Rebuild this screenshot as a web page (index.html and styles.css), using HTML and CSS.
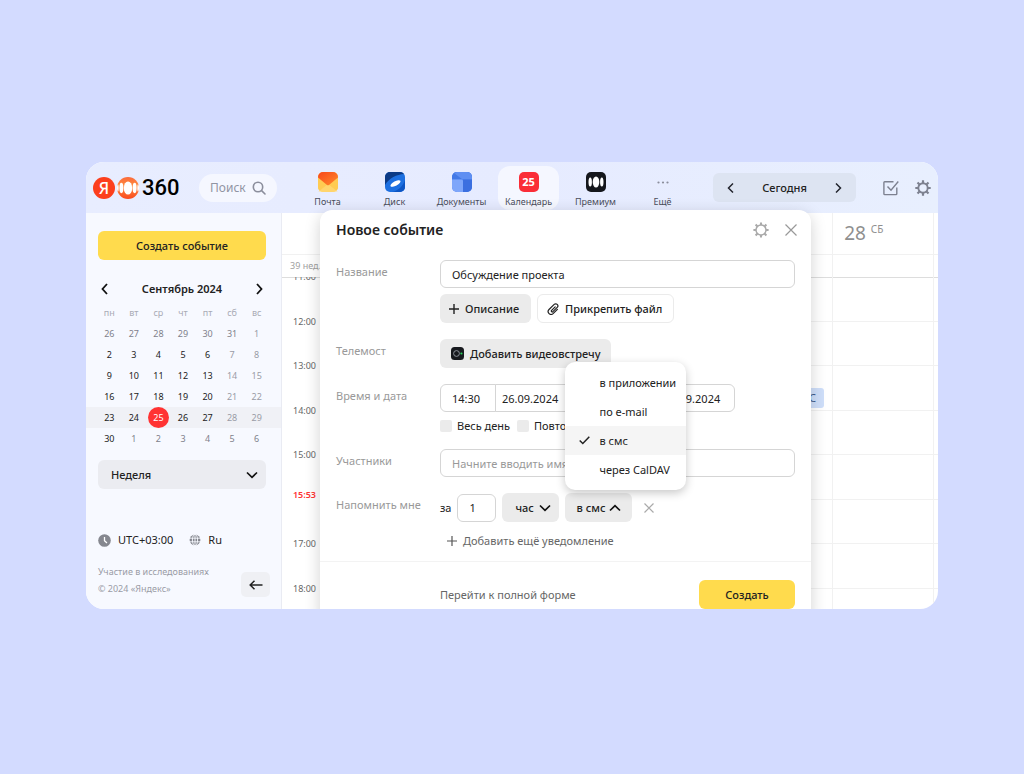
FILE: index.html
```html
<!DOCTYPE html>
<html lang="ru">
  <head>
    <meta charset="UTF-8" />
    <meta name="viewport" content="width=device-width, initial-scale=1.0" />
    <title>Календарь</title>
    <link rel="stylesheet" href="styles.css" />
  </head>
  <body>
    <div class="app">
      <header class="header">
        <a href="#" class="logo" aria-label="Яндекс 360">
          <span class="logo-ya">Я</span>
          <svg class="logo-mark" width="22" height="22" viewBox="0 0 22 22">
            <defs>
              <linearGradient id="orange" x1="0" y1="0" x2="0" y2="1">
                <stop offset="0" stop-color="#fb6a3c" />
                <stop offset="0.4" stop-color="#ff8a3d" />
                <stop offset="1" stop-color="#fa4a1e" />
              </linearGradient>
              <clipPath id="mark"><circle cx="11" cy="11" r="11" /></clipPath>
            </defs>
            <g clip-path="url(#mark)">
              <rect width="22" height="22" fill="url(#orange)" />
              <ellipse cx="11" cy="11" rx="4.200" ry="6.600" fill="#fff" />
              <ellipse cx="4.400" cy="11" rx="2" ry="5.200" fill="#fff" />
              <ellipse cx="17.600" cy="11" rx="2" ry="5.200" fill="#fff" />
              <ellipse cx="0.800" cy="11" rx="0.900" ry="3.800" fill="#fff" />
              <ellipse cx="21.200" cy="11" rx="0.900" ry="3.800" fill="#fff" />
            </g>
          </svg>
          <span class="logo-text">360</span>
        </a>

        <label class="search">
          <input type="text" class="search-input" placeholder="Поиск" aria-label="Поиск" />
          <svg width="14" height="14" viewBox="0 0 14 14" fill="none" stroke="#8b8e9c" stroke-width="1.600" stroke-linecap="round">
            <circle cx="6" cy="6" r="4.700" />
            <path d="M9.600 9.600 13 13" />
          </svg>
        </label>

        <nav class="tabs">
          <a href="#" class="tab">
            <svg width="20" height="20" viewBox="0 0 20 20">
              <defs>
                <linearGradient id="flap" x1="0" y1="0" x2="1" y2="1">
                  <stop offset="0" stop-color="#f8471c" />
                  <stop offset="1" stop-color="#ff8a2a" />
                </linearGradient>
              </defs>
              <rect width="20" height="20" rx="5" fill="#ffd56b" />
              <path d="M0 5 10 13 20 5v10a5 5 0 0 1-5 5H5a5 5 0 0 1-5-5z" fill="#ffcb52" />
              <path d="M0 20 10 12 20 20z" fill="#ffe08a" opacity="0.500" />
              <path d="M0 5.500V5a5 5 0 0 1 5-5h10a5 5 0 0 1 5 5v.5L11.300 12.800a2 2 0 0 1-2.600 0z" fill="url(#flap)" />
            </svg>
            <span>Почта</span>
          </a>
          <a href="#" class="tab">
            <svg width="20" height="20" viewBox="0 0 20 20">
              <rect width="20" height="20" rx="5" fill="#1d6fe0" />
              <path d="M0 11V5a5 5 0 0 1 5-5h10a5 5 0 0 1 4 2C12 2.500 4 6 0 13z" fill="#0b3a86" />
              <path d="M20 8v7a5 5 0 0 1-5 5H7C13 19 18 14 20 8z" fill="#0d55c4" />
              <ellipse cx="10.500" cy="11.500" rx="5.600" ry="2.300" transform="rotate(-28 10.500 11.500)" fill="#fff" />
            </svg>
            <span>Диск</span>
          </a>
          <a href="#" class="tab">
            <svg width="20" height="20" viewBox="0 0 20 20">
              <rect width="20" height="20" rx="5" fill="#4a80ee" />
              <path d="M5 0h10a5 5 0 0 1 5 5v2H0V5a5 5 0 0 1 5-5z" fill="#4379e6" />
              <path d="M2 1 10.500 7.500H20V5a5 5 0 0 0-5-5H5a5 5 0 0 0-3 1z" fill="#5f8ff2" />
              <path d="M11 7.500h9V15a5 5 0 0 1-5 5h-4z" fill="#3b6fe0" />
              <path d="M0 7.500h9.500a1.500 1.500 0 0 1 1.500 1.500v11H5a5 5 0 0 1-5-5z" fill="#7ea6fa" />
            </svg>
            <span>Документы</span>
          </a>
          <a href="#" class="tab tab-active">
            <span class="calendar-icon">25</span>
            <span>Календарь</span>
          </a>
          <a href="#" class="tab">
            <svg width="20" height="20" viewBox="0 0 20 20">
              <rect width="20" height="20" rx="5" fill="#15171c" />
              <ellipse cx="10" cy="10" rx="3.300" ry="5.500" fill="#fff" />
              <ellipse cx="4.200" cy="10" rx="1.700" ry="4.600" fill="#fff" />
              <ellipse cx="15.800" cy="10" rx="1.700" ry="4.600" fill="#fff" />
            </svg>
            <span>Премиум</span>
          </a>
          <a href="#" class="tab">
            <svg width="20" height="20" viewBox="0 0 20 20" fill="#8b8e9c">
              <circle cx="5.500" cy="10.500" r="1.100" />
              <circle cx="10" cy="10.500" r="1.100" />
              <circle cx="14.500" cy="10.500" r="1.100" />
            </svg>
            <span>Ещё</span>
          </a>
        </nav>

        <div class="date-nav">
          <button type="button" class="icon-btn" aria-label="Назад">
            <svg width="10" height="10" viewBox="0 0 10 10" fill="none" stroke="#23252e" stroke-width="1.500">
              <path d="M7 .5 2.500 5 7 9.500" />
            </svg>
          </button>
          <button type="button" class="today-btn">Сегодня</button>
          <button type="button" class="icon-btn" aria-label="Вперёд">
            <svg width="10" height="10" viewBox="0 0 10 10" fill="none" stroke="#23252e" stroke-width="1.500">
              <path d="M3 .5 7.500 5 3 9.500" />
            </svg>
          </button>
        </div>

        <div class="header-actions">
          <button type="button" class="icon-btn" aria-label="Задачи">
            <svg width="16" height="16" viewBox="0 0 16 16" fill="none" stroke="#7d8190" stroke-width="1.400">
              <path d="M10.500 1.700H1.700a.8.8 0 0 0-.8.8v11.300a.8.8 0 0 0 .8.8H13a.8.8 0 0 0 .8-.8V7.500" />
              <path d="M4.500 6.500 8 10.300 15.300 1.500" />
            </svg>
          </button>
          <button type="button" class="icon-btn" aria-label="Настройки">
            <svg width="16" height="16" viewBox="0 0 16 16" fill="none" stroke="#7d8190">
              <circle cx="8" cy="8" r="4.700" stroke-width="1.900" />
              <path stroke-width="2.200" d="M8 3.500V.3M8 12.500v3.200M3.500 8H.3M12.500 8h3.200M4.800 4.800 2.500 2.500M11.200 11.200l2.300 2.300M4.800 11.200l-2.300 2.300M11.200 4.800l2.300-2.300" />
            </svg>
          </button>
        </div>
      </header>

      <div class="content">
        <aside class="sidebar">
          <button type="button" class="btn btn-primary">Создать событие</button>

          <div class="month-header">
            <button type="button" class="icon-btn" aria-label="Предыдущий месяц">
              <svg width="10" height="12" viewBox="0 0 10 12" fill="none" stroke="#111" stroke-width="1.800">
                <path d="M7 1 2.500 6 7 11" />
              </svg>
            </button>
            <span>Сентябрь 2024</span>
            <button type="button" class="icon-btn" aria-label="Следующий месяц">
              <svg width="10" height="12" viewBox="0 0 10 12" fill="none" stroke="#111" stroke-width="1.800">
                <path d="M3 1 7.500 6 3 11" />
              </svg>
            </button>
          </div>

          <table class="month">
            <thead>
              <tr><th>пн</th><th>вт</th><th>ср</th><th>чт</th><th>пт</th><th>сб</th><th>вс</th></tr>
            </thead>
            <tbody>
              <tr><td class="other">26</td><td class="other">27</td><td class="other">28</td><td class="other">29</td><td class="other">30</td><td class="other">31</td><td>1</td></tr>
              <tr><td>2</td><td>3</td><td>4</td><td>5</td><td>6</td><td>7</td><td>8</td></tr>
              <tr><td>9</td><td>10</td><td>11</td><td>12</td><td>13</td><td>14</td><td>15</td></tr>
              <tr><td>16</td><td>17</td><td>18</td><td>19</td><td>20</td><td>21</td><td>22</td></tr>
              <tr class="current-week"><td>23</td><td>24</td><td><span class="today">25</span></td><td>26</td><td>27</td><td>28</td><td>29</td></tr>
              <tr><td>30</td><td class="other">1</td><td class="other">2</td><td class="other">3</td><td class="other">4</td><td class="other">5</td><td class="other">6</td></tr>
            </tbody>
          </table>

          <div class="select view-select">
            <select aria-label="Вид календаря">
              <option>Неделя</option>
              <option>День</option>
              <option>Месяц</option>
            </select>
            <svg width="12" height="8" viewBox="0 0 12 8" fill="none" stroke="#111" stroke-width="1.700">
              <path d="M1 1.500 6 6.300 11 1.500" />
            </svg>
          </div>

          <div class="locale">
            <a href="#">
              <svg width="13" height="13" viewBox="0 0 13 13">
                <circle cx="6.500" cy="6.500" r="6.300" fill="#85878f" />
                <path d="M6.500 3v3.700L9 9" fill="none" stroke="#fff" stroke-width="1.300" />
              </svg>
              UTC+03:00
            </a>
            <a href="#">
              <svg width="12" height="12" viewBox="0 0 12 12">
                <circle cx="6" cy="6" r="5.400" fill="#85878f" />
                <g fill="none" stroke="#f7f9ff" stroke-width="0.900">
                  <path d="M6 0v12M0 4.200h12M0 7.800h12" />
                  <ellipse cx="6" cy="6" rx="2.600" ry="5.800" />
                </g>
              </svg>
              Ru
            </a>
          </div>

          <footer class="sidebar-footer">
            <div class="links">
              <a href="#">Участие в исследованиях</a>
              <a href="#">© 2024 «Яндекс»</a>
            </div>
            <button type="button" class="collapse-btn" aria-label="Свернуть">
              <svg width="14" height="10" viewBox="0 0 14 10" fill="none" stroke="#222" stroke-width="1.500">
                <path d="M13.500 5H1.200M5.500 .8 1.200 5l4.300 4.200" />
              </svg>
            </button>
          </footer>
        </aside>

        <main class="week">
          <div class="week-row week-days">
            <div></div><div></div><div></div><div></div><div></div><div></div>
            <div class="day-name">28 <sup>СБ</sup></div>
            <div></div>
          </div>
          <div class="week-row week-allday">
            <div class="week-number">39 нед.</div>
            <div></div><div></div><div></div><div></div><div></div><div></div><div></div>
          </div>
          <div class="hours">
            <div class="week-row"><time>11:00</time><div></div><div></div><div></div><div></div><div></div><div></div><div></div></div>
            <div class="week-row"><time>12:00</time><div></div><div></div><div></div><div></div><div></div><div></div><div></div></div>
            <div class="week-row"><time>13:00</time><div></div><div></div><div></div><div></div><div class="slot"><a href="#" class="event">С</a></div><div></div><div></div></div>
            <div class="week-row"><time>14:00</time><div></div><div></div><div></div><div></div><div></div><div></div><div></div></div>
            <div class="week-row"><time>15:00</time><div></div><div></div><div></div><div></div><div></div><div></div><div></div></div>
            <div class="week-row"><time></time><div></div><div></div><div></div><div></div><div></div><div></div><div></div></div>
            <div class="week-row"><time>17:00</time><div></div><div></div><div></div><div></div><div></div><div></div><div></div></div>
            <div class="week-row week-row-last"><time>18:00</time><div></div><div></div><div></div><div></div><div></div><div></div><div></div></div>
            <time class="now">15:53</time>
          </div>
        </main>
      </div>

      <section class="modal" role="dialog" aria-labelledby="modalTitle">
        <div class="modal-header">
          <h1 id="modalTitle">Новое событие</h1>
          <button type="button" class="icon-btn" aria-label="Настройки события">
            <svg width="16" height="16" viewBox="0 0 16 16" fill="none" stroke="#aaa">
              <circle cx="8" cy="8" r="5" stroke-width="1.500" />
              <path stroke-width="2.100" d="M8 3V.4M8 13v2.600M3 8H.4M13 8h2.600M4.500 4.500 2.600 2.600M11.500 11.500l1.900 1.900M4.500 11.500l-1.900 1.900M11.500 4.500l1.900-1.900" />
            </svg>
          </button>
          <button type="button" class="icon-btn" aria-label="Закрыть">
            <svg width="12" height="12" viewBox="0 0 12 12" stroke="#999" stroke-width="1.200">
              <path d="M.5.5l11 11M11.500.5l-11 11" />
            </svg>
          </button>
        </div>

        <form class="form">
          <div class="form-row">
            <label class="form-label" for="eventName">Название</label>
            <div class="field">
              <input type="text" id="eventName" class="input" value="Обсуждение проекта" />
              <div class="button-group">
                <button type="button" class="btn btn-gray">
                  <svg width="10" height="10" viewBox="0 0 10 10" stroke="#222" stroke-width="1.400">
                    <path d="M5 0v10M0 5h10" />
                  </svg>
                  Описание
                </button>
                <button type="button" class="btn btn-outline">
                  <svg width="12" height="12" viewBox="0 0 12 12" fill="none" stroke="#222" stroke-width="1.200" stroke-linecap="round">
                    <path d="M8.200 3.800 4.600 7.400a.9.9 0 0 0 1.300 1.300l4.300-4.300a2.100 2.100 0 0 0-3-3L2 6.500a2.900 2.900 0 0 0 4.100 4.100l4.300-4.300" />
                  </svg>
                  Прикрепить файл
                </button>
              </div>
            </div>
          </div>

          <div class="form-row">
            <span class="form-label">Телемост</span>
            <div class="field">
              <button type="button" class="btn btn-gray btn-video">
                <svg width="13" height="13" viewBox="0 0 13 13">
                  <rect width="13" height="13" rx="3.500" fill="#17191e" />
                  <circle cx="5.500" cy="6.500" r="2.900" fill="none" stroke="#8d939c" stroke-width="1" />
                  <circle cx="10.400" cy="6.500" r="1.100" fill="#27d35a" />
                </svg>
                Добавить видеовстречу
              </button>
            </div>
          </div>

          <div class="form-row">
            <span class="form-label">Время и дата</span>
            <div class="field">
              <div class="range">
                <div class="date-group">
                  <input type="text" class="input time-input" value="14:30" aria-label="Время начала" />
                  <input type="text" class="input date-input" value="26.09.2024" aria-label="Дата начала" />
                </div>
                <span class="dash">–</span>
                <div class="date-group">
                  <input type="text" class="input time-input" value="15:00" aria-label="Время окончания" />
                  <input type="text" class="input date-input" value="26.09.2024" aria-label="Дата окончания" />
                </div>
              </div>
              <div class="checks">
                <label><input type="checkbox" /> Весь день</label>
                <label><input type="checkbox" /> Повторять</label>
              </div>
            </div>
          </div>

          <div class="form-row">
            <label class="form-label" for="members">Участники</label>
            <div class="field">
              <input type="text" id="members" class="input" placeholder="Начните вводить имя" />
            </div>
          </div>

          <div class="form-row">
            <label class="form-label" for="remindValue">Напомнить мне</label>
            <div class="field">
              <div class="reminder">
                <span>за</span>
                <input type="text" id="remindValue" class="input count-input" value="1" />
                <div class="select unit-select">
                  <select aria-label="Единица времени">
                    <option>час</option>
                    <option>мин</option>
                    <option>день</option>
                  </select>
                  <svg width="12" height="8" viewBox="0 0 12 8" fill="none" stroke="#111" stroke-width="1.700">
                    <path d="M1 1.500 6 6.300 11 1.500" />
                  </svg>
                </div>
                <div class="dropdown">
                  <button type="button" class="btn btn-gray dropdown-btn" aria-haspopup="listbox" aria-expanded="true">
                    в смс
                    <svg width="12" height="8" viewBox="0 0 12 8" fill="none" stroke="#111" stroke-width="1.700">
                      <path d="M1 6.500 6 1.700 11 6.500" />
                    </svg>
                  </button>
                  <ul class="menu" role="listbox">
                    <li role="option">в приложении</li>
                    <li role="option">по e-mail</li>
                    <li role="option" aria-selected="true" class="selected">
                      <svg width="11" height="9" viewBox="0 0 11 9" fill="none" stroke="#222" stroke-width="1.500">
                        <path d="M.7 4.500 3.800 7.500 10.300 .8" />
                      </svg>
                      в смс
                    </li>
                    <li role="option">через CalDAV</li>
                  </ul>
                </div>
                <button type="button" class="icon-btn remove-btn" aria-label="Удалить уведомление">
                  <svg width="10" height="10" viewBox="0 0 10 10" stroke="#aaa" stroke-width="1.200">
                    <path d="M.5.5l9 9M9.500.5l-9 9" />
                  </svg>
                </button>
              </div>
              <button type="button" class="add-btn">
                <svg width="10" height="10" viewBox="0 0 10 10" stroke="#555" stroke-width="1.200">
                  <path d="M5 0v10M0 5h10" />
                </svg>
                Добавить ещё уведомление
              </button>
            </div>
          </div>
        </form>

        <div class="modal-footer">
          <a href="#">Перейти к полной форме</a>
          <button type="button" class="btn btn-primary">Создать</button>
        </div>
      </section>
    </div>
  </body>
</html>
```
FILE: styles.css
```css
/* Base Styles */
:root {
  --page-color: #d3dbff;
  --yellow: #ffdb4d;
  --gray: #ebebeb;
  --border: #d5d5d5;
  --line: #f1f1f1;
  --text-color: #222;
  --muted: #999;
}

* {
  box-sizing: border-box;
}

body {
  margin: 0;
  padding: 162px 86px;
  background: var(--page-color);
  color: var(--text-color);
  font-family: "Noto Sans", sans-serif;
  font-size: 11px;
  line-height: 16px;
}

button,
input,
select {
  font: inherit;
  color: inherit;
}

button {
  padding: 0;
  border: none;
  background: none;
  cursor: pointer;
}

a {
  color: inherit;
  text-decoration: none;
}

svg {
  display: block;
  flex-shrink: 0;
}

.app {
  position: relative;
  display: flex;
  flex-direction: column;
  min-width: 852px;
  border-radius: 18px;
  overflow: hidden;
  background: #fff;
}

/* Header */
.header {
  display: flex;
  align-items: center;
  height: 51px;
  padding: 0 7px;
  background: linear-gradient(90deg, #e8edff, #e6ebff 50%, #e8effe);
}

.logo {
  display: flex;
  align-items: center;
  gap: 2px;
  width: 106px;
}

.logo-ya {
  width: 22px;
  height: 22px;
  border-radius: 50%;
  background: #fc3f1d;
  color: #fff;
  font-size: 16px;
  font-weight: 500;
  line-height: 22px;
  text-align: center;
}

.logo-text {
  margin-left: 1px;
  color: #000;
  font-family: Roboto, sans-serif;
  font-size: 22px;
  font-weight: 500;
  line-height: 22px;
}

.search {
  display: flex;
  align-items: center;
  justify-content: space-between;
  width: 78px;
  height: 28px;
  padding: 0 11px;
  border-radius: 14px;
  background: #f5f7ff;
}

.search-input {
  width: 40px;
  padding: 0;
  border: none;
  outline: none;
  background: none;
  font-size: 12px;
}

.search-input::placeholder {
  color: #9194a3;
  opacity: 1;
}

.tabs {
  display: flex;
  gap: 6px;
  margin-left: 20px;
}

.tab {
  display: flex;
  flex-direction: column;
  align-items: center;
  gap: 3px;
  width: 61px;
  height: 44px;
  padding-top: 6px;
  border-radius: 12px;
  color: #4a4d5a;
  font-size: 9px;
  line-height: 14px;
}

.tab-active {
  background: #f5f7ff;
}

.calendar-icon {
  width: 20px;
  height: 20px;
  border-radius: 5px;
  background: #fa2d37;
  color: #fff;
  font-size: 11px;
  font-weight: 700;
  line-height: 20px;
  text-align: center;
}

.icon-btn {
  display: flex;
  align-items: center;
  justify-content: center;
}

.date-nav {
  display: flex;
  align-items: center;
  justify-content: space-between;
  width: 143px;
  height: 29px;
  margin-left: 20px;
  padding: 0 13px;
  border-radius: 6px;
  background: #dde4f2;
}

.today-btn {
  font-weight: 500;
}

.header-actions {
  display: flex;
  gap: 16px;
  margin-left: auto;
}

.content {
  display: flex;
}

/* Sidebar */
.sidebar {
  width: 196px;
  padding: 18px 15px 12px 12px;
  border-right: 1px solid #e9ebf3;
  background: #f7f9ff;
  overflow: hidden;
}

.btn {
  display: inline-flex;
  align-items: center;
  justify-content: center;
  gap: 6px;
  height: 29px;
  border-radius: 6px;
  font-weight: 500;
}

.btn-primary {
  background: var(--yellow);
}

.sidebar .btn-primary {
  width: 100%;
}

.month-header {
  display: flex;
  align-items: center;
  justify-content: space-between;
  height: 20px;
  margin: 19px 2px 3px;
  font-weight: 600;
}

.month {
  width: 172px;
  margin-left: -1px;
  border-collapse: collapse;
  table-layout: fixed;
  font-size: 9px;
  line-height: 12px;
  text-align: center;
}

.month th,
.month td {
  height: 21px;
  padding: 0;
}

.month th {
  color: #a9abb5;
  font-weight: 400;
}

.month td:nth-child(n + 6) {
  color: #9a9ca6;
}

.month td.other {
  color: #7f818b;
}

.current-week {
  background: #f0f1f6;
  box-shadow: -12px 0 #f0f1f6, 12px 0 #f0f1f6;
}

.today {
  display: block;
  width: 21px;
  height: 21px;
  margin: 0 auto;
  border-radius: 50%;
  background: #ff3333;
  color: #fff;
  line-height: 21px;
}

.select {
  position: relative;
}

.select select {
  width: 100%;
  height: 29px;
  padding: 0 13px;
  border: none;
  border-radius: 6px;
  background: var(--gray);
  font-weight: 500;
  appearance: none;
}

.select svg {
  position: absolute;
  top: 11px;
  right: 8px;
  pointer-events: none;
}

.view-select {
  margin-top: 11px;
}

.view-select select {
  background: #ebecf1;
}

.locale {
  display: flex;
  gap: 16px;
  margin-top: 42px;
}

.locale a {
  display: flex;
  align-items: center;
  gap: 7px;
  height: 18px;
}

.sidebar-footer {
  display: flex;
  align-items: flex-end;
  justify-content: space-between;
  margin: 14px -4px 0 0;
}

.links {
  display: flex;
  flex-direction: column;
  color: #9a9ca6;
  font-size: 9px;
  line-height: 17px;
  white-space: nowrap;
}

.collapse-btn {
  display: flex;
  align-items: center;
  justify-content: center;
  width: 29px;
  height: 25px;
  border-radius: 5px;
  background: #eff0f4;
}

/* Week grid */
.week {
  flex: 1;
  display: flex;
  flex-direction: column;
}

.week-row {
  display: grid;
  grid-template-columns: 46px repeat(6, 1fr) 5px;
}

.week-row > div {
  border-left: 1px solid var(--line);
  border-bottom: 1px solid var(--line);
}

.week-row > :first-child {
  border-left: none;
}

.week-days {
  height: 42px;
}

.week-allday {
  height: 22px;
}

.week-allday > div {
  border-bottom-color: #ddd;
}

.day-name {
  padding: 10px 11px;
  color: #8f8f8f;
  font-size: 19px;
  line-height: 20px;
}

.day-name sup {
  font-size: 10px;
  line-height: 10px;
  vertical-align: 7px;
}

.week-number {
  padding-left: 8px;
  color: #a0a0a0;
  font-size: 9px;
  line-height: 22px;
  white-space: nowrap;
}

.hours {
  position: relative;
  flex: 1;
  display: flex;
  flex-direction: column;
  overflow: hidden;
}

.hours .week-row {
  flex: 1;
}

.hours .week-row-last {
  flex: 0 0 20px;
}

.week-row-last > div {
  border-bottom: none;
}

.hours time {
  height: 14px;
  margin-top: -7px;
  padding-right: 12px;
  color: #666;
  font-size: 9px;
  line-height: 14px;
  text-align: right;
}

.hours .now {
  position: absolute;
  top: 211px;
  left: 0;
  width: 46px;
  margin: 0;
  color: #f33;
  font-weight: 600;
}

.slot {
  padding-top: 22px;
}

.event {
  display: block;
  height: 20px;
  margin-right: 8px;
  padding-right: 8px;
  border-radius: 3px;
  background: #cfdffa;
  color: #44608c;
  line-height: 20px;
  text-align: right;
}

/* New event dialog */
.modal {
  position: absolute;
  top: 48px;
  left: 234px;
  width: 491px;
  border-radius: 12px;
  background: #fff;
  box-shadow: 0 4px 16px rgba(0, 0, 0, 0.18);
}

.modal-header {
  display: flex;
  align-items: center;
  gap: 16px;
  height: 40px;
  padding: 0 14px 0 16px;
}

.modal-header h1 {
  flex: 1;
  margin: 0;
  font-size: 14px;
  font-weight: 600;
}

.form {
  display: flex;
  flex-direction: column;
  gap: 16px;
  padding: 10px 16px 12px;
}

.form-row {
  display: flex;
}

.form-label {
  width: 104px;
  color: var(--muted);
  line-height: 24px;
}

.field {
  flex: 1;
}

.input {
  display: block;
  width: 100%;
  height: 28px;
  padding: 0 11px;
  border: 1px solid var(--border);
  border-radius: 6px;
  outline: none;
  background: #fff;
}

.input::placeholder {
  color: var(--muted);
  opacity: 1;
}

.button-group {
  display: flex;
  gap: 6px;
  margin-top: 6px;
}

.btn-gray {
  padding: 0 12px 0 9px;
  background: var(--gray);
}

.btn-outline {
  padding: 0 11px 0 9px;
  border: 1px solid var(--gray);
}

.btn-video {
  padding: 0 11px;
}

.range {
  display: flex;
  align-items: center;
}

.date-group {
  display: flex;
}

.time-input {
  width: 56px;
  border-radius: 6px 0 0 6px;
}

.date-input {
  width: 78px;
  margin-left: -1px;
  padding: 0 6px;
  border-radius: 0 6px 6px 0;
}

.dash {
  width: 29px;
  text-align: center;
}

.checks {
  display: flex;
  gap: 7px;
  margin-top: 6px;
}

.checks label {
  display: flex;
  align-items: center;
  gap: 5px;
  height: 15px;
}

.checks input {
  width: 12px;
  height: 12px;
  margin: 0;
  border-radius: 2px;
  background: var(--gray);
  appearance: none;
}

.reminder {
  display: flex;
  align-items: center;
  gap: 6px;
}

.count-input {
  width: 39px;
}

.unit-select {
  width: 57px;
}

.dropdown {
  position: relative;
}

.dropdown-btn {
  gap: 4px;
  width: 67px;
  padding: 0;
}

.menu {
  position: absolute;
  bottom: 32px;
  left: 0;
  width: 121px;
  margin: 0;
  padding: 6px 0;
  border-radius: 10px;
  background: #fff;
  box-shadow: 0 3px 10px rgba(0, 0, 0, 0.22);
  list-style: none;
}

.menu li {
  position: relative;
  padding-left: 34px;
  line-height: 29px;
  white-space: nowrap;
}

.menu .selected {
  background: #f5f5f5;
}

.menu svg {
  position: absolute;
  top: 10px;
  left: 14px;
}

.remove-btn {
  margin-left: 6px;
}

.add-btn {
  display: flex;
  align-items: center;
  gap: 6px;
  margin: 11px 0 0 7px;
  color: #666;
}

.modal-footer {
  display: flex;
  align-items: center;
  justify-content: space-between;
  padding: 18px 16px 16px 120px;
  border-top: 1px solid #f3f3f3;
  color: #666;
}

.modal-footer .btn {
  width: 96px;
  color: var(--text-color);
}
```
